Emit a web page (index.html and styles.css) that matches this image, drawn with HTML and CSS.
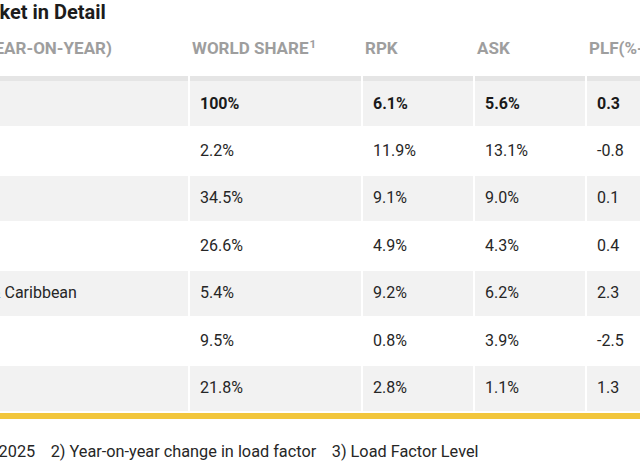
FILE: index.html
```html
<!DOCTYPE html>
<html lang="en">
<head>
<meta charset="utf-8">
<title>Air Passenger Market in Detail</title>
<link rel="stylesheet" href="styles.css">
</head>
<body>
<div class="viewport">
  <h2 class="title">Market in Detail</h2>
  <div class="table-wrap">
    <table class="market">
      <colgroup>
        <col class="c-region">
        <col class="c-share">
        <col class="c-num">
        <col class="c-num">
        <col class="c-num">
        <col class="c-num">
      </colgroup>
      <thead>
        <tr>
          <th class="h-region">APRIL 2025 (YEAR-ON-YEAR)</th>
          <th>WORLD SHARE<sup>1</sup></th>
          <th>RPK</th>
          <th>ASK</th>
          <th>PLF(%-PT)<sup>2</sup></th>
          <th>PLF(LEVEL)<sup>3</sup></th>
        </tr>
      </thead>
      <tbody>
        <tr class="shade total">
          <td>Total Market</td><td>100%</td><td>6.1%</td><td>5.6%</td><td>0.3</td><td>83.4%</td>
        </tr>
        <tr>
          <td>Africa</td><td>2.2%</td><td>11.9%</td><td>13.1%</td><td>-0.8</td><td>74.9%</td>
        </tr>
        <tr class="shade">
          <td>Asia Pacific</td><td>34.5%</td><td>9.1%</td><td>9.0%</td><td>0.1</td><td>83.1%</td>
        </tr>
        <tr>
          <td>Europe</td><td>26.6%</td><td>4.9%</td><td>4.3%</td><td>0.4</td><td>85.9%</td>
        </tr>
        <tr class="shade">
          <td>Latin America &amp; Caribbean</td><td>5.4%</td><td>9.2%</td><td>6.2%</td><td>2.3</td><td>84.6%</td>
        </tr>
        <tr>
          <td>Middle East</td><td>9.5%</td><td>0.8%</td><td>3.9%</td><td>-2.5</td><td>79.0%</td>
        </tr>
        <tr class="shade">
          <td>North America</td><td>21.8%</td><td>2.8%</td><td>1.1%</td><td>1.3</td><td>83.8%</td>
        </tr>
      </tbody>
    </table>
    <div class="rule"></div>
  </div>
  <p class="notes"><span>1) % of industry RPK in 2025</span><span>2) Year-on-year change in load factor</span><span>3) Load Factor Level</span></p>
</div>
</body>
</html>
```
FILE: styles.css
```css
html, body {
  margin: 0;
  padding: 0;
  background: #ffffff;
}

body {
  font-family: Roboto, "Liberation Sans", Arial, sans-serif;
  color: #222222;
}

.viewport {
  width: 640px;
  height: 462px;
  overflow: hidden;
}

.title {
  margin: 0 0 0 -36px;
  font-size: 20px;
  line-height: 24px;
  font-weight: 700;
  color: #1c1c1c;
  white-space: nowrap;
}

.table-wrap {
  margin-left: -124px;
  width: 935px;
}

.market {
  border-collapse: separate;
  border-spacing: 2px;
  table-layout: fixed;
  width: 935px;
}

.c-region { width: 310px; }
.c-share { width: 171px; }
.c-num { width: 110px; }

.market th {
  text-align: left;
  font-size: 17px;
  font-weight: 700;
  color: #9e9e9e;
  line-height: 20px;
  padding: 12px 2px 16px;
  white-space: nowrap;
  overflow: hidden;
}

.market th.h-region {
  padding-left: 5px;
}

.market th sup {
  font-size: 11.5px;
  line-height: 0;
  vertical-align: 6px;
  margin-left: 1px;
}

.market td {
  font-size: 16px;
  line-height: 20px;
  padding: 12.75px 10px;
  white-space: nowrap;
  color: #262626;
}

.market tr.shade td {
  background: #f2f2f2;
}

.market tr.total td {
  border-top: 5px solid #e5e5e5;
  padding-top: 12.5px;
  padding-bottom: 12.5px;
  font-weight: 700;
  color: #1a1a1a;
}

.rule {
  height: 6px;
  background: #f2c63c;
}

.notes {
  margin: 23px 0 0 -169px;
  font-size: 16.3px;
  line-height: 20px;
  color: #262626;
  white-space: nowrap;
  display: flex;
  gap: 15.5px;
}
```
